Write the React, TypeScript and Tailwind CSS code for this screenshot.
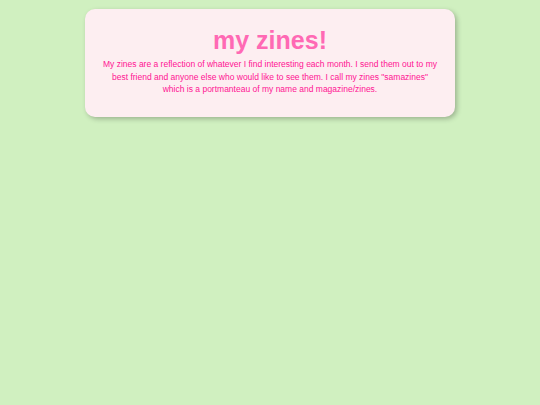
export default function App() {
  return (
    <div className="min-h-[405px] w-full bg-[#d0f0c0] pt-[9px]" style={{ fontFamily: '"Liberation Sans", Arial, sans-serif' }}>
      <div className="mx-auto w-[370px] rounded-[10px] bg-[#fdeef1] px-[15px] pt-[17px] pb-[21px] text-center shadow-[2px_2px_5px_rgba(0,0,0,0.25)]">
        <h1 className="text-[25px] font-bold leading-[29px] text-[#ff69b4]">my zines!</h1>
        <p className="mt-[3px] text-[8.5px] leading-[12.5px] text-[#ff1493]">
          My zines are a reflection of whatever I find interesting each month. I send them out to my best friend and anyone else who would like to see them. I call my zines "samazines" which is a portmanteau of my name and magazine/zines.
        </p>
      </div>
    </div>
  );
}
